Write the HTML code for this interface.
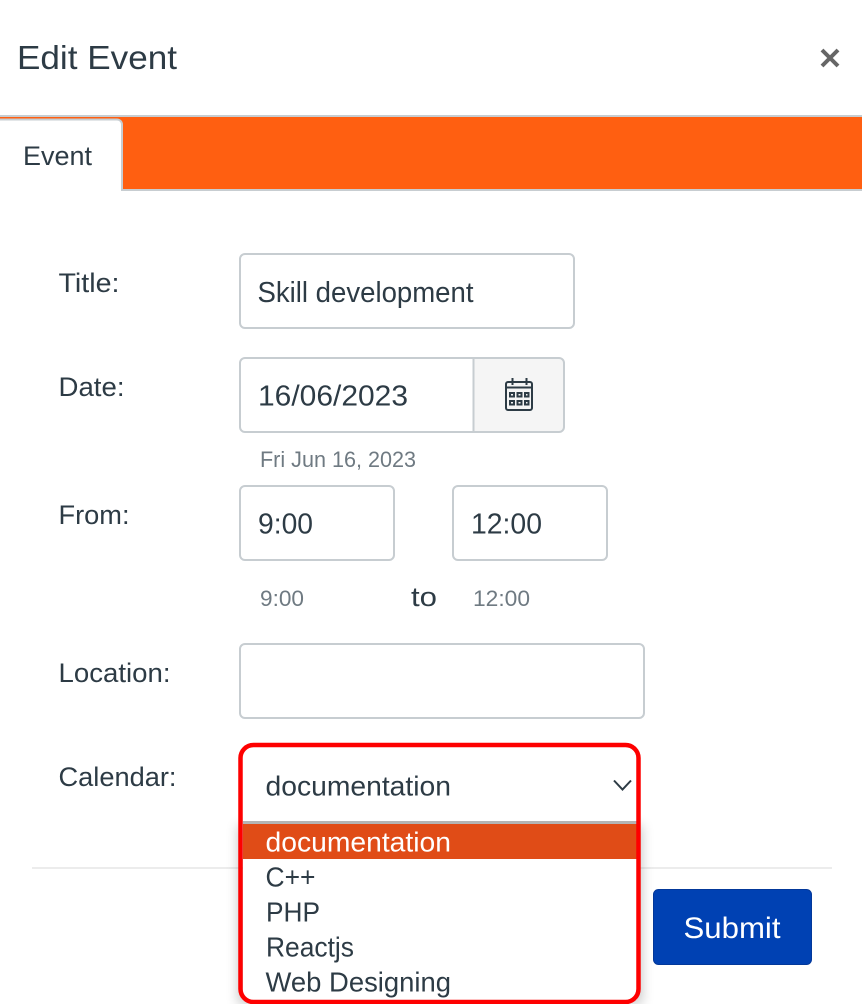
<!DOCTYPE html>
<html><head><meta charset="utf-8"><title>Edit Event</title>
<style>
html,body{margin:0;padding:0;background:#fff;width:862px;height:1004px;overflow:hidden}
svg{display:block}
text{font-family:"Liberation Sans",sans-serif;fill:#2d3b45}
</style></head><body>
<svg width="862" height="1004" viewBox="0 0 862 1004" xmlns="http://www.w3.org/2000/svg">
<defs><filter id="s" x="-10%" y="-10%" width="120%" height="120%"><feGaussianBlur stdDeviation="6"/></filter></defs>
<rect width="862" height="1004" fill="#fff"/>
<text x="17" y="69" font-size="33" textLength="160" lengthAdjust="spacingAndGlyphs">Edit Event</text>
<path d="M822 50L838 66M838 50L822 66" stroke="#666" stroke-width="4" fill="none"/>
<rect y="115" width="862" height="2" fill="#c7cdd1"/>
<rect y="117" width="862" height="72" fill="#ff5f11"/>
<rect y="189" width="862" height="2" fill="#c7cdd1"/>
<path d="M0 119H117a5 5 0 0 1 5 5V191H0Z" fill="#fff"/>
<path d="M0 119.500H117a5 5 0 0 1 5 5V191" fill="none" stroke="#c7cdd1" stroke-width="2"/>
<text x="23" y="165" font-size="27" textLength="69" lengthAdjust="spacingAndGlyphs">Event</text>
<g font-size="27">
<text x="58.500" y="292" textLength="61" lengthAdjust="spacingAndGlyphs">Title:</text>
<text x="58.500" y="396" textLength="66" lengthAdjust="spacingAndGlyphs">Date:</text>
<text x="58.500" y="524" textLength="71" lengthAdjust="spacingAndGlyphs">From:</text>
<text x="58.500" y="682" textLength="112" lengthAdjust="spacingAndGlyphs">Location:</text>
<text x="58.500" y="786" textLength="118" lengthAdjust="spacingAndGlyphs">Calendar:</text>
</g>
<g fill="#fff" stroke="#c7cdd1" stroke-width="2">
<rect x="240" y="254" width="334" height="74" rx="5"/>
<path d="M473 358H559a5 5 0 0 1 5 5V427a5 5 0 0 1-5 5H473Z" fill="#f5f5f5"/>
<path d="M473 358H245a5 5 0 0 0-5 5V427a5 5 0 0 0 5 5H473"/>
<line x1="473.500" y1="358" x2="473.500" y2="432"/>
<rect x="240" y="486" width="154" height="74" rx="5"/>
<rect x="453" y="486" width="154" height="74" rx="5"/>
<rect x="240" y="644" width="404" height="74" rx="5"/>
</g>
<g font-size="29">
<text x="257.500" y="302" textLength="216" lengthAdjust="spacingAndGlyphs">Skill development</text>
<text x="258" y="405.500" textLength="150" lengthAdjust="spacingAndGlyphs">16/06/2023</text>
<text x="258" y="533.500" textLength="55" lengthAdjust="spacingAndGlyphs">9:00</text>
<text x="471" y="533.500" textLength="71" lengthAdjust="spacingAndGlyphs">12:00</text>
</g>
<g fill="none" stroke="#2d3b45" stroke-width="2">
<rect x="506" y="382" width="26" height="28" rx="2"/>
<line x1="506" y1="387.500" x2="532" y2="387.500"/>
<path d="M512.500 378V385M526.500 378V385" />
</g>
<g fill="#2d3b45">
<path fill-rule="evenodd" d="M509 392h6v5.500h-6zM511 394v1.500h2v-1.500zM516.500 392h6v5.500h-6zM518.500 394v1.500h2v-1.500zM524 392h5.500v5.500h-5.500zM526 394v1.500h1.500v-1.500zM509 400h6v5.500h-6zM511 402v1.500h2v-1.500zM516.500 400h6v5.500h-6zM518.500 402v1.500h2v-1.500zM524 400h5.500v5.500h-5.500zM526 402v1.500h1.500v-1.500z"/>
</g>
<g font-size="22">
<text x="260" y="467" textLength="156" lengthAdjust="spacingAndGlyphs" style="fill:#6f7a82">Fri Jun 16, 2023</text>
<text x="260" y="606" textLength="44" lengthAdjust="spacingAndGlyphs" style="fill:#6f7a82">9:00</text>
<text x="473" y="606" textLength="57" lengthAdjust="spacingAndGlyphs" style="fill:#6f7a82">12:00</text>
</g>
<text x="411" y="606" font-size="27" textLength="26" lengthAdjust="spacingAndGlyphs">to</text>
<rect x="32" y="867" width="800" height="2" fill="#ececec"/>
<rect x="653.500" y="889.500" width="158" height="75" rx="5" fill="#0041b3" stroke="#03389a"/>
<text x="683.500" y="938" font-size="30" textLength="97" lengthAdjust="spacingAndGlyphs" style="fill:#fff">Submit</text>
<rect x="238" y="825" width="404" height="179" fill="#000" opacity=".22" filter="url(#s)"/>
<rect x="243" y="748" width="394" height="252" fill="#fff"/>
<rect x="243" y="821" width="394" height="3" fill="#b4b4b4"/>
<rect x="243" y="824" width="394" height="35" fill="#e04c17"/>
<g font-size="28">
<text x="265.500" y="795.500" textLength="185.500" lengthAdjust="spacingAndGlyphs">documentation</text>
<text x="265.500" y="851.500" textLength="185.500" lengthAdjust="spacingAndGlyphs" style="fill:#fff">documentation</text>
<text x="265.500" y="886.500" textLength="50" lengthAdjust="spacingAndGlyphs">C++</text>
<text x="266" y="921.500" textLength="54" lengthAdjust="spacingAndGlyphs">PHP</text>
<text x="266" y="956.500" textLength="88" lengthAdjust="spacingAndGlyphs">Reactjs</text>
<text x="265.500" y="991.500" textLength="185.500" lengthAdjust="spacingAndGlyphs">Web Designing</text>
</g>
<path d="M614 780.500L622.500 789.500L631 780.500" fill="none" stroke="#2d3b45" stroke-width="2"/>
<rect x="240.500" y="745" width="398" height="257" rx="13" fill="none" stroke="#fe0000" stroke-width="4.500"/>
</svg>
</body></html>
